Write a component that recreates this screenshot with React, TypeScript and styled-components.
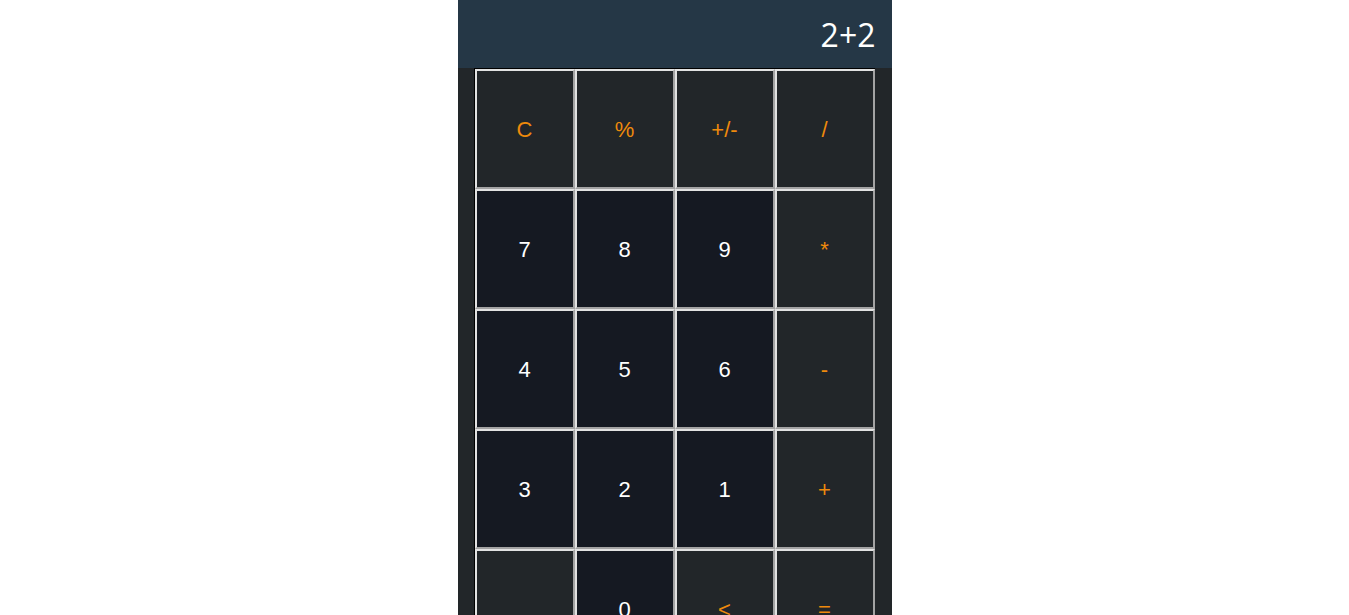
import React from "react";
import styled, { createGlobalStyle } from "styled-components";

const Global = createGlobalStyle`
  html, body { margin: 0; padding: 0; background: #ffffff; }
  body { font-family: "Liberation Sans", Arial, sans-serif; }
`;

const Calculator = styled.div`
  width: 434px;
  margin: 0 auto;
  background: #222629;
  min-height: 615px;
`;

const Display = styled.div`
  height: 68px;
  background: #253746;
  color: #ffffff;
  font-family: "Open Sans", sans-serif;
  font-size: 32px;
  display: flex;
  align-items: center;
  justify-content: flex-end;
  padding-right: 16px;
  box-sizing: border-box;
`;

const Keypad = styled.div`
  margin-left: 16px;
  width: 401px;
  display: grid;
  grid-template-columns: repeat(4, 100px);
  grid-auto-rows: 120px;
  border-top: 1px solid #000000;
  border-left: 1px solid #000000;
  box-sizing: border-box;
`;

const Key = styled.button<{ $variant: "digit" | "op" }>`
  box-sizing: border-box;
  width: 100px;
  height: 120px;
  margin: 0;
  padding: 2px 0 0;
  border-width: 2px;
  border-style: solid;
  border-color: #e2e2e2 #a3a3a3 #a3a3a3 #e2e2e2;
  background: ${(p) => (p.$variant === "digit" ? "#151922" : "#222629")};
  color: ${(p) => (p.$variant === "digit" ? "#ffffff" : "#ee8a0c")};
  font-family: "Liberation Sans", Arial, sans-serif;
  font-size: 22px;
  cursor: pointer;
`;

type K = { label: string; v: "digit" | "op" };

const keys: K[] = [
  { label: "C", v: "op" },
  { label: "%", v: "op" },
  { label: "+/-", v: "op" },
  { label: "/", v: "op" },
  { label: "7", v: "digit" },
  { label: "8", v: "digit" },
  { label: "9", v: "digit" },
  { label: "*", v: "op" },
  { label: "4", v: "digit" },
  { label: "5", v: "digit" },
  { label: "6", v: "digit" },
  { label: "-", v: "op" },
  { label: "3", v: "digit" },
  { label: "2", v: "digit" },
  { label: "1", v: "digit" },
  { label: "+", v: "op" },
  { label: "", v: "op" },
  { label: "0", v: "digit" },
  { label: "<", v: "op" },
  { label: "=", v: "op" },
];

export default function App() {
  return (
    <>
      <Global />
      <Calculator>
        <Display>2+2</Display>
        <Keypad>
          {keys.map((k, i) => (
            <Key key={i} $variant={k.v}>
              {k.label}
            </Key>
          ))}
        </Keypad>
      </Calculator>
    </>
  );
}
